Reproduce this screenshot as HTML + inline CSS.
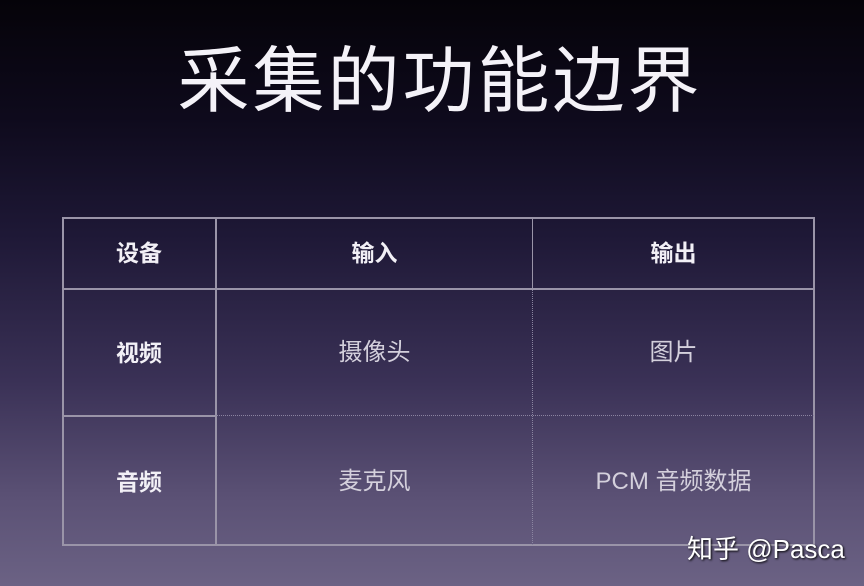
<!DOCTYPE html>
<html><head><meta charset="utf-8"><style>
html,body{margin:0;padding:0}
body{width:864px;height:586px;overflow:hidden;position:relative;
background:linear-gradient(180deg,#050309 0%,#0e0a1c 20%,#1e1836 40%,#3a3156 65%,#5b5175 85%,#6b6284 100%);
font-family:"Liberation Sans","Noto Sans CJK SC",sans-serif;}
.t{position:absolute;left:8px;width:864px;top:34px;text-align:center;color:#f4f2f8;font-size:72px;line-height:96px;letter-spacing:3px;font-weight:normal}
.l{position:absolute;background:#9a94a8}
.d{position:absolute}
.c{position:absolute;text-align:center;font-size:23px;line-height:30px}
.h{color:#f2f0f6;font-weight:bold}
.b{color:#d4d0dc;font-size:24px}
.w{position:absolute;left:687px;top:532px;color:#fff;font-size:26px;line-height:34px;text-shadow:1px 1px 2px #000}
</style></head><body>
<div class="t">采集的功能边界</div>
<div class="l" style="left:62px;top:217px;width:753px;height:2px"></div>
<div class="l" style="left:62px;top:544px;width:753px;height:2px"></div>
<div class="l" style="left:62px;top:217px;width:2px;height:329px"></div>
<div class="l" style="left:813px;top:217px;width:2px;height:329px"></div>
<div class="l" style="left:62px;top:288px;width:753px;height:2px"></div>
<div class="l" style="left:215px;top:217px;width:2px;height:329px"></div>
<div class="l" style="left:532px;top:217px;width:1px;height:72px"></div>
<div class="l" style="left:62px;top:415px;width:154px;height:2px"></div>
<div class="d" style="left:216px;top:415px;width:598px;border-top:1px dotted #8a84a0"></div>
<div class="d" style="left:532px;top:290px;height:255px;border-left:1px dotted #8a84a0"></div>
<div class="c h" style="left:62px;width:154px;top:238px">设备</div>
<div class="c h" style="left:216px;width:317px;top:238px">输入</div>
<div class="c h" style="left:533px;width:281px;top:238px">输出</div>
<div class="c h" style="left:62px;width:154px;top:338px">视频</div>
<div class="c b" style="left:216px;width:317px;top:338px">摄像头</div>
<div class="c b" style="left:533px;width:281px;top:338px">图片</div>
<div class="c h" style="left:62px;width:154px;top:467px">音频</div>
<div class="c b" style="left:216px;width:317px;top:467px">麦克风</div>
<div class="c b" style="left:533px;width:281px;top:467px">PCM 音频数据</div>
<div class="w">知乎 @Pasca</div>
</body></html>
